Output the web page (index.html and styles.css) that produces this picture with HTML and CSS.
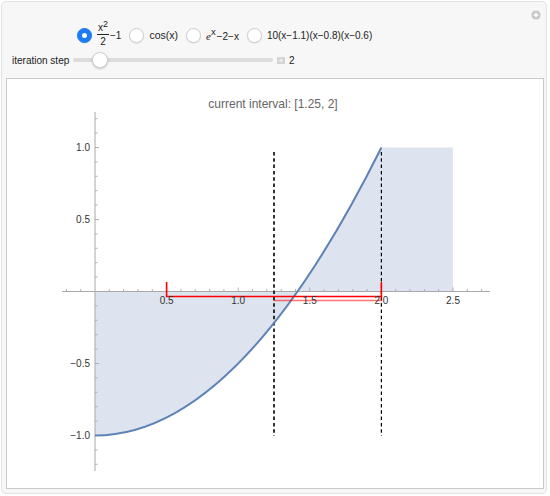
FILE: index.html
```html
<!DOCTYPE html>
<html>
<head>
<meta charset="utf-8">
<link rel="stylesheet" href="styles.css">
</head>
<body>
<div class="panel">
  <div class="close-btn"><svg width="10" height="10" viewBox="0 0 10 10"><circle cx="5" cy="5" r="4.6" fill="#c6c6c6"/><path d="M5 2.6v4.8M2.6 5h4.8" stroke="#fff" stroke-width="1.4"/></svg></div>
  <div class="row-radios">
    <span class="radio selected"></span>
    <span class="label math">
      <span class="frac"><span class="num">x<sup>2</sup></span><span class="den">2</span></span><span>−1</span>
    </span>
    <span class="radio"></span>
    <span class="label math cos">cos(x)</span>
    <span class="radio"></span>
    <span class="label math"><span class="inl"><span class="e">e</span><sup class="supx">x</sup>−2−x</span></span>
    <span class="radio"></span>
    <span class="label math">10(x−1.1)(x−0.8)(x−0.6)</span>
  </div>
  <div class="row-slider">
    <span class="slider-label">iteration step</span>
    <div class="track"><span class="thumb"></span></div>
    <span class="plusbox"><svg width="8" height="7" viewBox="0 0 8 7"><rect width="8" height="7" fill="#d4d4d4"/><path d="M4 1.5v4M2 3.5h4" stroke="#f2f2f2" stroke-width="1.2"/></svg></span>
    <span class="value">2</span>
  </div>
  <div class="frame">
    <svg class="plot" width="536" height="409" viewBox="7 79 536 409">
      <text class="title" x="273" y="108" text-anchor="middle">current interval: [1.25, 2]</text>
      <path d="M95,291.5 L95,435.5 Q238.2,435.5 381.4,147.5 L453,147.5 L453,291.5 Z" fill="#dee4ef"/>
      <!-- axes -->
      <path d="M62,291.5 H490 M95,112 V471" stroke="#a8a8a8" stroke-width="1" fill="none"/>
      <!-- x ticks -->
      <path stroke="#a8a8a8" stroke-width="0.9" fill="none" d="M66.4,291.5v-2.5 M80.7,291.5v-2.5 M109.3,291.5v-2.5 M123.6,291.5v-2.5 M138,291.5v-2.5 M152.3,291.5v-2.5 M166.6,291.5v-4 M180.9,291.5v-2.5 M195.2,291.5v-2.5 M209.6,291.5v-2.5 M223.9,291.5v-2.5 M238.2,291.5v-4 M252.5,291.5v-2.5 M266.8,291.5v-2.5 M281.2,291.5v-2.5 M295.5,291.5v-2.5 M309.8,291.5v-4 M324.1,291.5v-2.5 M338.4,291.5v-2.5 M352.8,291.5v-2.5 M367.1,291.5v-2.5 M381.4,291.5v-4 M395.7,291.5v-2.5 M410,291.5v-2.5 M424.4,291.5v-2.5 M438.7,291.5v-2.5 M453,291.5v-4 M467.3,291.5v-2.5 M481.6,291.5v-2.5"/>
      <!-- y ticks -->
      <path stroke="#a8a8a8" stroke-width="0.9" fill="none" d="M95,118.7h2.5 M95,133.1h2.5 M95,147.5h4 M95,161.9h2.5 M95,176.3h2.5 M95,190.7h2.5 M95,205.1h2.5 M95,219.5h4 M95,233.9h2.5 M95,248.3h2.5 M95,262.7h2.5 M95,277.1h2.5 M95,305.9h2.5 M95,320.3h2.5 M95,334.7h2.5 M95,349.1h2.5 M95,363.5h4 M95,377.9h2.5 M95,392.3h2.5 M95,406.7h2.5 M95,421.1h2.5 M95,435.5h4 M95,449.9h2.5 M95,464.3h2.5"/>
      <!-- dashed lines -->
      <path d="M274,152 V436" stroke="#000" stroke-width="1.6" stroke-dasharray="3.5,2.8" fill="none"/>
      <path d="M381.4,152 V436" stroke="#000" stroke-width="1.2" stroke-dasharray="3.5,2.8" fill="none"/>
      <!-- curve -->
      <path d="M95,435.5 Q238.2,435.5 381.4,147.5" stroke="#5d82b7" stroke-width="2" fill="none"/>
      <!-- brackets -->
      <path d="M166.6,282 V296.5 H381.4 V282" stroke="#f00" stroke-width="1.6" fill="none"/>
      <path d="M274,300.5 H381.4 V296" stroke="#f00" stroke-opacity="0.55" stroke-width="1.6" fill="none"/>
      <!-- labels -->
      <g class="tick-label">
        <text x="166.6" y="304" text-anchor="middle">0.5</text>
        <text x="238.2" y="304" text-anchor="middle">1.0</text>
        <text x="309.8" y="304" text-anchor="middle">1.5</text>
        <text x="381.4" y="304" text-anchor="middle">2.0</text>
        <text x="453" y="304" text-anchor="middle">2.5</text>
        <text x="90" y="151" text-anchor="end">1.0</text>
        <text x="90" y="223" text-anchor="end">0.5</text>
        <text x="90" y="367" text-anchor="end">−0.5</text>
        <text x="90" y="439" text-anchor="end">−1.0</text>
      </g>
    </svg>
  </div>
</div>
</body>
</html>
```

FILE: styles.css
```css
html, body {
  margin: 0;
  padding: 0;
  background: #ffffff;
}
body {
  font-family: "Liberation Sans", Arial, sans-serif;
  color: #222;
}
.panel {
  position: relative;
  margin: 1px;
  width: 546px;
  height: 493px;
  box-sizing: border-box;
  border: 1px solid #e2e2e2;
  border-radius: 5px;
  background: #f7f7f7;
  padding-top: 18px;
}
.close-btn {
  position: absolute;
  right: 5px;
  top: 8px;
  width: 10px;
  height: 10px;
  line-height: 0;
}
.row-radios {
  height: 30px;
  display: flex;
  align-items: center;
  padding-left: 75px;
}
.radio {
  width: 15px;
  height: 15px;
  box-sizing: border-box;
  border-radius: 50%;
  background: #fff;
  border: 1px solid #cfcfcf;
  box-shadow: 0 0.5px 1px rgba(0,0,0,0.12);
  flex: none;
  position: relative;
}
.radio.selected {
  background: #1d7cf4;
  border-color: #1d7cf4;
}
.radio.selected::after {
  content: "";
  position: absolute;
  left: 4px;
  top: 4px;
  width: 5px;
  height: 5px;
  border-radius: 50%;
  background: #fff;
}
.label {
  font-size: 10px;
  color: #222;
  margin-left: 5px;
  margin-right: 8px;
  display: flex;
  align-items: center;
  white-space: nowrap;
}
.cos {
  font-size: 10.5px;
}
.inl {
  display: inline-block;
  padding-top: 2px;
}
.frac {
  display: inline-flex;
  flex-direction: column;
  align-items: center;
  margin-right: 1px;
}
.frac .num {
  border-bottom: 1px solid #222;
  padding: 0 1px 1px;
  line-height: 11px;
}
.frac .den {
  line-height: 12px;
  padding-top: 1px;
}
sup {
  font-size: 9px;
  vertical-align: 4px;
  line-height: 0;
}
.e {
  font-style: italic;
  font-family: "Liberation Serif", serif;
  font-size: 11px;
}
.supx {
  margin-right: 1px;
  font-size: 9.5px;
  vertical-align: 5px;
}
.row-slider {
  margin-top: 2px;
  height: 16px;
  display: flex;
  align-items: center;
  padding-left: 10px;
}
.slider-label {
  font-size: 10px;
  color: #222;
  width: 57px;
  white-space: nowrap;
}
.track {
  position: relative;
  margin-left: 4px;
  width: 200px;
  height: 4px;
  border-radius: 2px;
  background: #dcdcdc;
}
.thumb {
  position: absolute;
  left: 19px;
  top: -6px;
  width: 16px;
  height: 16px;
  box-sizing: border-box;
  border-radius: 50%;
  background: #fff;
  border: 1px solid #d0d0d0;
  box-shadow: 0 1px 2px rgba(0,0,0,0.2);
}
.plusbox {
  margin-left: 4px;
  width: 8px;
  height: 7px;
  line-height: 0;
}
.value {
  margin-left: 4px;
  font-size: 10px;
  color: #222;
}
.frame {
  margin-top: 10px;
  margin-left: 4px;
  width: 538px;
  height: 411px;
  box-sizing: border-box;
  border: 1px solid #c9c9c9;
  background: #fff;
}
.plot {
  display: block;
}
.title {
  font-family: "Liberation Sans", Arial, sans-serif;
  font-size: 12px;
  fill: #666;
}
.tick-label text {
  font-family: "Liberation Sans", Arial, sans-serif;
  font-size: 10px;
  fill: #333;
}
```
